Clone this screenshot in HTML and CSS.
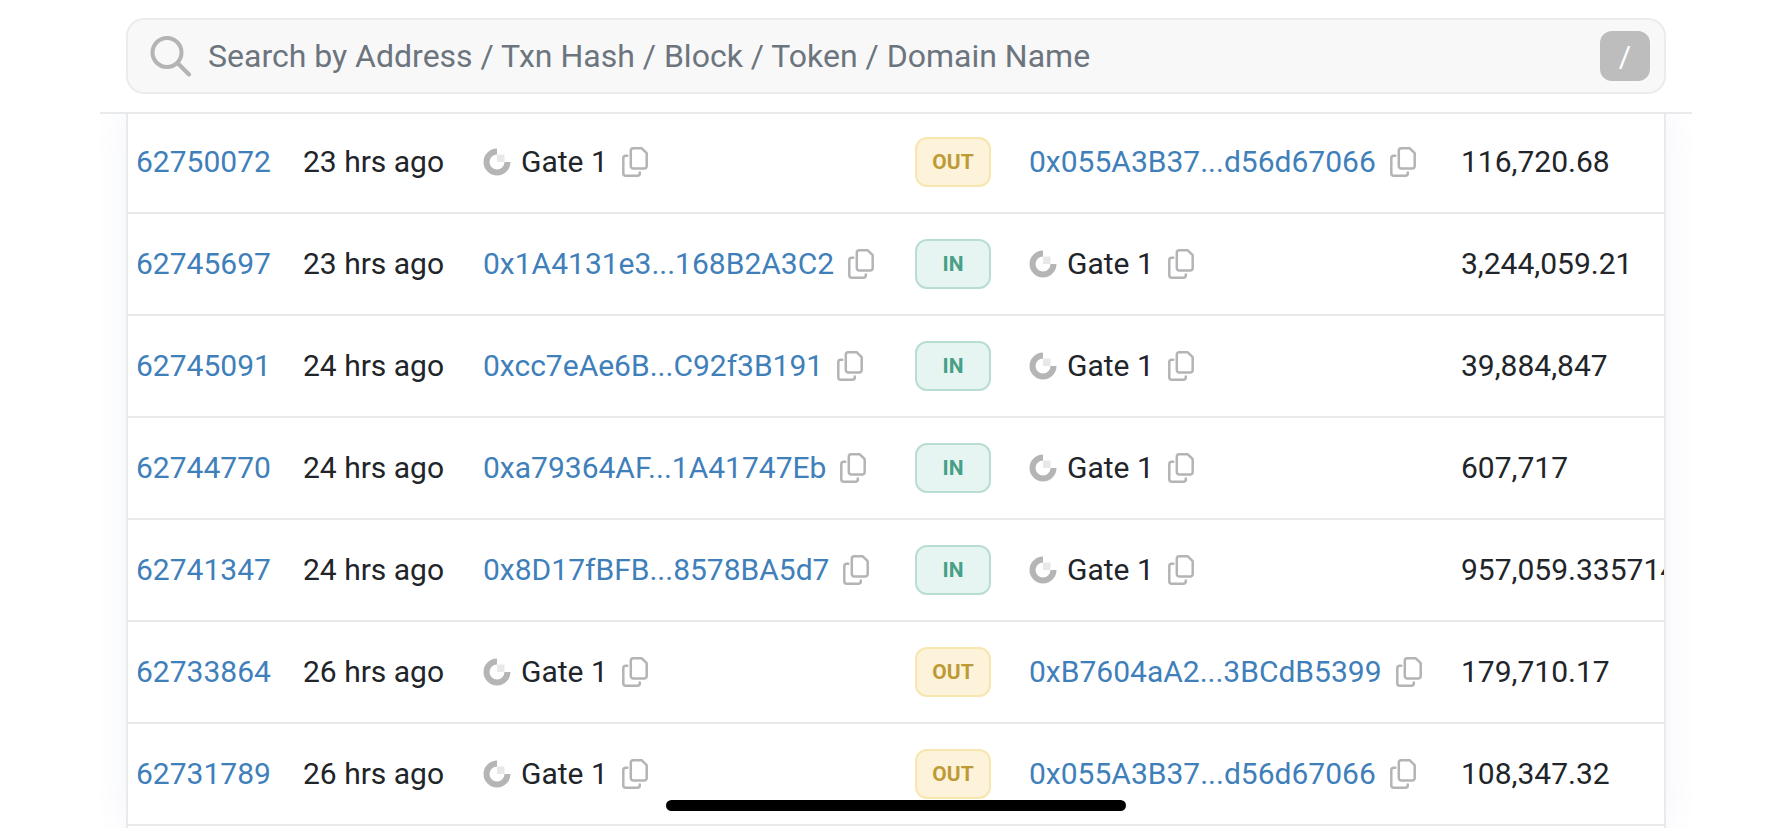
FILE: index.html
```html
<!DOCTYPE html>
<html lang="en">
<head>
    <meta charset="UTF-8">
    <meta name="viewport" content="width=device-width, initial-scale=1.0">
    <title>Token Transfers</title>
    <link rel="stylesheet" href="styles.css">
</head>
<body>
    <!-- shared icons -->
    <svg class="icon-defs" aria-hidden="true">
        <symbol id="icon-search" viewBox="0 0 42 42">
            <circle cx="17" cy="17.500" r="14.500"/>
            <path d="M28 28.500L39 39.500"/>
        </symbol>
        <symbol id="icon-copy" viewBox="0 0 26 30">
            <path d="M11.300 1.300H19.800L24.700 6.200V19a2.500 2.500 0 0 1-2.500 2.500H11.300A2.500 2.500 0 0 1 8.800 19V3.800A2.500 2.500 0 0 1 11.300 1.300z"/>
            <path d="M5.300 8.800H3.800A2.500 2.500 0 0 0 1.300 11.300V26.200A2.500 2.500 0 0 0 3.800 28.700H15.300A2.500 2.500 0 0 0 17.800 26.200V25.500"/>
        </symbol>
        <symbol id="icon-gate" viewBox="0 0 28 28">
            <path d="M14 3.500A10.500 10.500 0 1 0 24.500 14" fill="none" stroke="#b5b5b5" stroke-width="6"/>
            <path d="M14 6.500h7.500V14H14z" fill="#e8e8e8"/>
        </symbol>
    </svg>

    <header class="header">
        <form class="search" role="search">
            <svg class="search-icon" aria-hidden="true"><use href="#icon-search"/></svg>
            <input class="search-input" type="text" aria-label="Search" placeholder="Search by Address / Txn Hash / Block / Token / Domain Name">
            <button class="search-key" type="button">/</button>
        </form>
    </header>

    <main class="main-content">
        <div class="card">
            <table class="transfers">
                <colgroup>
                    <col class="col-block">
                    <col class="col-age">
                    <col class="col-address">
                    <col class="col-direction">
                    <col class="col-address">
                    <col>
                </colgroup>
                <tbody>
                    <tr>
                        <td><a href="#">62750072</a></td>
                        <td>23 hrs ago</td>
                        <td><div class="address"><svg class="gate" aria-hidden="true"><use href="#icon-gate"/></svg><span>Gate 1</span><button class="copy" type="button" aria-label="Copy"><svg><use href="#icon-copy"/></svg></button></div></td>
                        <td><span class="badge out">OUT</span></td>
                        <td><div class="address"><a href="#">0x055A3B37...d56d67066</a><button class="copy" type="button" aria-label="Copy"><svg><use href="#icon-copy"/></svg></button></div></td>
                        <td>116,720.68</td>
                    </tr>
                    <tr>
                        <td><a href="#">62745697</a></td>
                        <td>23 hrs ago</td>
                        <td><div class="address"><a href="#">0x1A4131e3...168B2A3C2</a><button class="copy" type="button" aria-label="Copy"><svg><use href="#icon-copy"/></svg></button></div></td>
                        <td><span class="badge in">IN</span></td>
                        <td><div class="address"><svg class="gate" aria-hidden="true"><use href="#icon-gate"/></svg><span>Gate 1</span><button class="copy" type="button" aria-label="Copy"><svg><use href="#icon-copy"/></svg></button></div></td>
                        <td>3,244,059.21</td>
                    </tr>
                    <tr>
                        <td><a href="#">62745091</a></td>
                        <td>24 hrs ago</td>
                        <td><div class="address"><a href="#">0xcc7eAe6B...C92f3B191</a><button class="copy" type="button" aria-label="Copy"><svg><use href="#icon-copy"/></svg></button></div></td>
                        <td><span class="badge in">IN</span></td>
                        <td><div class="address"><svg class="gate" aria-hidden="true"><use href="#icon-gate"/></svg><span>Gate 1</span><button class="copy" type="button" aria-label="Copy"><svg><use href="#icon-copy"/></svg></button></div></td>
                        <td>39,884,847</td>
                    </tr>
                    <tr>
                        <td><a href="#">62744770</a></td>
                        <td>24 hrs ago</td>
                        <td><div class="address"><a href="#">0xa79364AF...1A41747Eb</a><button class="copy" type="button" aria-label="Copy"><svg><use href="#icon-copy"/></svg></button></div></td>
                        <td><span class="badge in">IN</span></td>
                        <td><div class="address"><svg class="gate" aria-hidden="true"><use href="#icon-gate"/></svg><span>Gate 1</span><button class="copy" type="button" aria-label="Copy"><svg><use href="#icon-copy"/></svg></button></div></td>
                        <td>607,717</td>
                    </tr>
                    <tr>
                        <td><a href="#">62741347</a></td>
                        <td>24 hrs ago</td>
                        <td><div class="address"><a href="#">0x8D17fBFB...8578BA5d7</a><button class="copy" type="button" aria-label="Copy"><svg><use href="#icon-copy"/></svg></button></div></td>
                        <td><span class="badge in">IN</span></td>
                        <td><div class="address"><svg class="gate" aria-hidden="true"><use href="#icon-gate"/></svg><span>Gate 1</span><button class="copy" type="button" aria-label="Copy"><svg><use href="#icon-copy"/></svg></button></div></td>
                        <td>957,059.335714</td>
                    </tr>
                    <tr>
                        <td><a href="#">62733864</a></td>
                        <td>26 hrs ago</td>
                        <td><div class="address"><svg class="gate" aria-hidden="true"><use href="#icon-gate"/></svg><span>Gate 1</span><button class="copy" type="button" aria-label="Copy"><svg><use href="#icon-copy"/></svg></button></div></td>
                        <td><span class="badge out">OUT</span></td>
                        <td><div class="address"><a href="#">0xB7604aA2...3BCdB5399</a><button class="copy" type="button" aria-label="Copy"><svg><use href="#icon-copy"/></svg></button></div></td>
                        <td>179,710.17</td>
                    </tr>
                    <tr>
                        <td><a href="#">62731789</a></td>
                        <td>26 hrs ago</td>
                        <td><div class="address"><svg class="gate" aria-hidden="true"><use href="#icon-gate"/></svg><span>Gate 1</span><button class="copy" type="button" aria-label="Copy"><svg><use href="#icon-copy"/></svg></button></div></td>
                        <td><span class="badge out">OUT</span></td>
                        <td><div class="address"><a href="#">0x055A3B37...d56d67066</a><button class="copy" type="button" aria-label="Copy"><svg><use href="#icon-copy"/></svg></button></div></td>
                        <td>108,347.32</td>
                    </tr>
                </tbody>
            </table>
        </div>
    </main>

    <div class="home-bar"></div>
</body>
</html>
```
FILE: styles.css
```css
* {
    margin: 0;
    padding: 0;
    box-sizing: border-box;
}

body {
    font-family: Roboto, "Liberation Sans", sans-serif;
    font-size: 30px;
    line-height: 40px;
    color: #212529;
    background-color: #fff;
    min-height: 100vh;
    display: flex;
    flex-direction: column;
}

a {
    color: #3f80ba;
    text-decoration: none;
}

button {
    font-family: inherit;
    border: none;
    cursor: pointer;
}

.icon-defs {
    display: none;
}

/* search bar */
.header {
    position: sticky;
    top: 0;
    z-index: 10;
    margin: 0 100px;
    padding: 18px 26px;
    background-color: #fff;
    box-shadow: 0 2px 0 #e9eaec;
}

.search {
    display: flex;
    align-items: center;
    gap: 16px;
    height: 76px;
    padding: 0 14px 0 22px;
    background-color: #f8f8f9;
    border: 2px solid #ebecee;
    border-radius: 18px;
}

.search-icon {
    width: 42px;
    height: 42px;
    flex: none;
    fill: none;
    stroke: #b2b4b6;
    stroke-width: 4;
    stroke-linecap: round;
}

.search-input {
    flex: 1;
    min-width: 0;
    font-family: inherit;
    font-size: 32px;
    color: #212529;
    background: none;
    border: none;
    outline: none;
}

.search-input::placeholder {
    color: #6c757d;
    opacity: 1;
}

.search-key {
    width: 50px;
    height: 50px;
    font-size: 30px;
    color: #fff;
    background-color: #bdbdbd;
    border-radius: 12px;
}

/* transfers list */
.main-content {
    flex: 1;
    display: flex;
    margin: 0 100px;
    padding: 0 26px;
    overflow: hidden;
}

.card {
    flex: 1;
    min-width: 0;
    overflow: hidden;
    background-color: #fff;
    border: solid #e9eaec;
    border-width: 0 2px;
    box-shadow: 0 0 36px rgba(189, 197, 225, 0.2);
}

.transfers {
    width: 100%;
    table-layout: fixed;
    border-collapse: separate;
    border-spacing: 0;
}

.col-block {
    width: 167px;
}

.col-age {
    width: 180px;
}

.col-address {
    width: 432px;
}

.col-direction {
    width: 114px;
}

.transfers td {
    height: 102px;
    padding-left: 8px;
    white-space: nowrap;
    vertical-align: middle;
    border-bottom: 2px solid #e9eaec;
}

.address {
    display: flex;
    align-items: center;
}

.gate {
    width: 28px;
    height: 28px;
    margin-right: 10px;
}

.copy {
    display: flex;
    margin-left: 14px;
    background: none;
}

.copy svg {
    width: 26px;
    height: 30px;
    fill: none;
    stroke: #b2b4b6;
    stroke-width: 2.5;
    stroke-linecap: round;
    stroke-linejoin: round;
}

.badge {
    display: flex;
    align-items: center;
    justify-content: center;
    width: 76px;
    height: 50px;
    font-size: 21px;
    font-weight: 700;
    border: 2px solid;
    border-radius: 12px;
}

.badge.out {
    color: #bd9a35;
    background-color: #fdf3da;
    border-color: #f7e6ae;
}

.badge.in {
    color: #48a086;
    background-color: #e7f5f2;
    border-color: #b9ddd3;
}

.home-bar {
    position: fixed;
    left: 50%;
    bottom: 17px;
    z-index: 20;
    width: 460px;
    height: 11px;
    background-color: #000;
    border-radius: 6px;
    transform: translateX(-50%);
}

@media (max-width: 1024px) {
    .header,
    .main-content {
        margin: 0;
    }

    .card {
        overflow-x: auto;
    }

    .transfers {
        width: 1540px;
    }
}
```
